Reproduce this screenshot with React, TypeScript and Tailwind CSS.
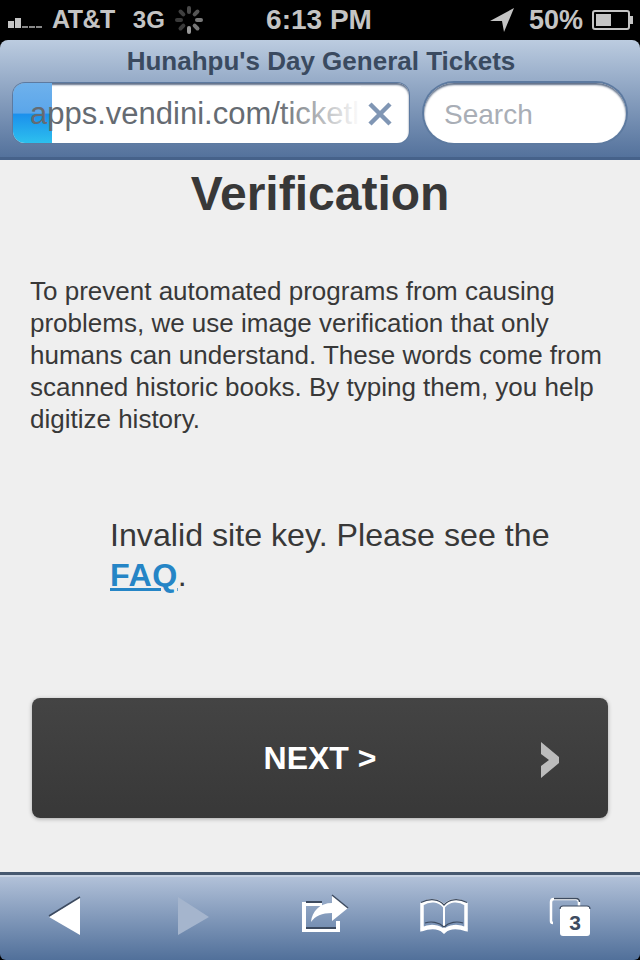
const font = { fontFamily: '"Liberation Sans", Arial, sans-serif' };

const spokes = [
  { deg: 0, color: "#4a4a4a" },
  { deg: 45, color: "#555555" },
  { deg: 90, color: "#7a7a7a" },
  { deg: 135, color: "#777777" },
  { deg: 180, color: "#999999" },
  { deg: 225, color: "#3a3a3a" },
  { deg: 270, color: "#3a3a3a" },
  { deg: 315, color: "#3f3f3f" },
];

const Spinner = () => (
  <svg width="28" height="28" viewBox="0 0 28 28" className="ml-[10px]">
    {spokes.map((s) => (
      <rect key={s.deg} x="12" y="0" width="4" height="8" rx="2" fill={s.color} transform={`rotate(${s.deg} 14 14)`} />
    ))}
  </svg>
);

const StatusBar = () => (
  <div className="relative flex h-[40px] items-center bg-black pl-[8px] pr-[6px] text-[25px] font-bold text-[#c4c4c4]">
    <svg width="38" height="12" viewBox="0 0 38 12" className="mt-[4px]">
      <rect x="0" y="5" width="6" height="7" fill="#c4c4c4" />
      <rect x="7" y="2" width="6" height="10" fill="#c4c4c4" />
      <rect x="14" y="10" width="6" height="2" fill="#888" />
      <rect x="21" y="10" width="6" height="2" fill="#888" />
      <rect x="28" y="10" width="6" height="2" fill="#888" />
    </svg>
    <span className="ml-[6px] tracking-[-0.5px]">AT&amp;T</span>
    <span className="ml-[18px] text-[24px]">3G</span>
    <Spinner />
    <span className="absolute left-[-2px] right-0 text-center text-[28px] leading-none">6:13 PM</span>
    <div className="ml-auto flex items-center">
      <svg width="24" height="24" viewBox="0 0 24 24">
        <path d="M24 0 L0 13 L12 13 L14 24 Z" fill="#c4c4c4" />
      </svg>
      <span className="ml-[15px] text-[27px]">50%</span>
      <svg width="42" height="20" viewBox="0 0 42 20" className="ml-[9px]">
        <rect x="1" y="1" width="36" height="18" rx="2" fill="none" stroke="#c4c4c4" strokeWidth="2" />
        <rect x="4" y="4" width="15" height="12" fill="#c4c4c4" />
        <rect x="38" y="6" width="3" height="8" fill="#c4c4c4" />
      </svg>
    </div>
  </div>
);

const NavBar = () => (
  <div className="h-[120px] rounded-t-[8px] border-b-[3px] border-[#46628a] bg-gradient-to-b from-[#bccce0] to-[#54729c]">
    <div className="h-[43px] pl-[2px] pt-[3px] text-center text-[26px] font-bold leading-[36px] text-[#3a4a60]">Hunahpu's Day General Tickets</div>
    <div className="flex h-[60px] gap-[15px] pl-[13px] pr-[14px]">
      <div className="relative flex w-[396px] items-center overflow-hidden rounded-[12px] bg-white shadow-[inset_0_2px_2px_#5f6f88,0_0_0_1px_#5d7aa0]">
        <div className="absolute left-0 top-0 h-full w-[39px] bg-[linear-gradient(#6eb1ec_0%,#5ba6ea_50%,#1b90ec_52%,#2dc0ee_100%)]" />
        <span className="relative ml-[17px] mt-[2px] w-[328px] overflow-hidden whitespace-nowrap text-[31px] text-[#656b72]">apps.vendini.com/ticketl</span>
        <div className="absolute bottom-0 left-[264px] top-[3px] w-[84px] bg-gradient-to-r from-white/0 to-white" />
        <svg width="26" height="26" viewBox="0 0 26 26" className="absolute right-[16px] top-[18px]">
          <path d="M3 3 L23 23 M23 3 L3 23" stroke="#8096b4" strokeWidth="4.5" />
        </svg>
      </div>
      <div className="flex flex-1 items-center rounded-[30px] bg-white pl-[20px] pt-[3px] text-[28px] text-[#a9aeb6] shadow-[inset_0_2px_2px_#5f6f88,0_0_0_2px_#5d7aa0]">
        Search
      </div>
    </div>
  </div>
);

const Content = () => (
  <div className="h-[712px] bg-[#efefef] text-[#383838]">
    <h1 className="h-[115px] pt-[6px] text-center text-[48px] font-bold leading-[56px]">Verification</h1>
    <p className="px-[30px] text-[26px] leading-[32px]">
      To prevent automated programs from causing problems, we use image verification that only humans can understand. These words come from scanned historic books. By typing them, you help digitize history.
    </p>
    <p className="mt-[80px] pl-[110px] pr-[70px] text-[32.2px] leading-[40px]">
      Invalid site key. Please see the <a className="font-bold tracking-[0.5px] text-[#2585c6] underline">FAQ</a>.
    </p>
    <div className="relative mx-[32px] mt-[103px] flex h-[120px] items-center justify-center rounded-[8px] bg-gradient-to-b from-[#444] to-[#383838] text-[32px] font-bold text-white shadow-[0_1px_4px_rgba(0,0,0,0.3)]">
      NEXT &gt;
      <svg width="18" height="36" viewBox="0 0 18 36" className="absolute right-[49px] top-[44px]">
        <path d="M0 0 L18 15 L18 21 L0 36 L0 24 L8 18 L0 12 Z" fill="#bcbcbc" />
      </svg>
    </div>
  </div>
);

const Toolbar = () => (
  <div className="flex h-[88px] items-start rounded-b-[6px] border-t-[3px] border-[#46586f] bg-gradient-to-b from-[#b4c3da] to-[#51709a] shadow-[inset_0_2px_0_#c9d4e4]">
    <svg width="640" height="85" viewBox="0 0 640 85">
      {/* back / forward */}
      <path d="M80 22 L49 42 L80 60 Z" fill="#fff" />
      <path d="M80 22 L49 41" stroke="#3d4b60" strokeWidth="1.5" />
      <path d="M178 22 L209 42 L178 60 Z" fill="#a5b5cd" />
      {/* share */}
      <path d="M302 27 H322 V31 H306 V53 H336 V46 H340 V57 H302 Z" fill="#fff" />
      <path d="M306 27 H322 M306 53 H336" stroke="#3d4b60" strokeWidth="2" />
      <path d="M332 20 L348 33 L332 46 V38 C322 38 315 41 311 47 C312 36 320 28 332 28 Z" fill="#fff" />
      <path d="M332 20 L348 33" stroke="#3d4b60" strokeWidth="1.5" />
      {/* bookmarks */}
      <path d="M422 29 C430 24 439 25 444 31 C449 25 458 24 466 29 V54 C458 50 449 51 444 56 C439 51 430 50 422 54 Z" fill="none" stroke="#fff" strokeWidth="3.5" />
      <path d="M421 55 C430 52 439 52 444 57 C449 52 458 52 467 55" fill="none" stroke="#fff" strokeWidth="3" />
      <path d="M444 31 V55" stroke="#fff" strokeWidth="2" />
      <path d="M421 27.5 C430 23 439 24 444 30 C449 24 458 23 467 27.5 M425 48 C431 46 439 47 444 52 C449 47 457 46 463 48" fill="none" stroke="#3d4b60" strokeWidth="1.2" />
      {/* tabs */}
      <path d="M553 48 Q551 48 551 46 V27 Q551 24 554 24 H576 Q579 24 579 27 V31" fill="none" stroke="#fff" strokeWidth="2.5" />
      <path d="M554 23.5 H576 Q579.5 23.5 579.5 27" fill="none" stroke="#3d4b60" strokeWidth="1.5" />
      <rect x="560" y="31" width="30" height="30" rx="3" fill="#fff" />
      <path d="M560 34 Q560 31 563 31 H587 Q590 31 590 34" fill="none" stroke="#3d4b60" strokeWidth="1.2" />
      <text x="575" y="55" textAnchor="middle" fontSize="21" fontWeight="700" fill="#3d4b60">3</text>
    </svg>
  </div>
);

export default function App() {
  return (
    <div className="h-[960px] w-[640px] overflow-hidden bg-black" style={font}>
      <StatusBar />
      <NavBar />
      <Content />
      <Toolbar />
    </div>
  );
}
